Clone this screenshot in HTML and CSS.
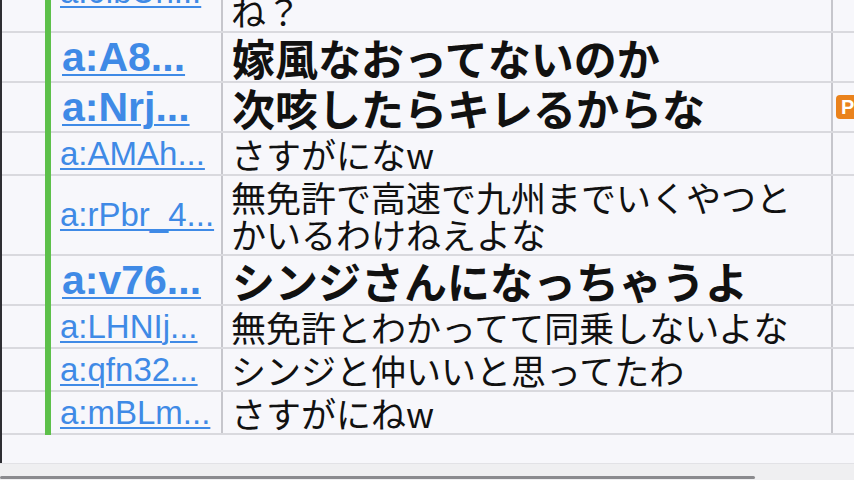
FILE: index.html
```html
<!DOCTYPE html>
<html lang="ja">
<head>
<meta charset="utf-8">
<title>コメント一覧</title>
<link rel="stylesheet" href="styles.css">
</head>
<body>
<div class="viewport">
  <table class="comments">
    <colgroup>
      <col class="c-blank"><col class="c-name"><col class="c-text"><col class="c-extra">
    </colgroup>
    <tbody>
      <tr>
        <td class="blank"></td>
        <td class="name"><a href="#">a:0lbUh...</a></td>
        <td class="text">お前ら本当に免許持ってるんだよ<br>ね？</td>
        <td class="extra"></td>
      </tr>
      <tr class="big">
        <td class="blank"></td>
        <td class="name"><a href="#">a:A8...</a></td>
        <td class="text">嫁風なおってないのか</td>
        <td class="extra"></td>
      </tr>
      <tr class="big">
        <td class="blank"></td>
        <td class="name"><a href="#">a:Nrj...</a></td>
        <td class="text">次咳したらキレるからな</td>
        <td class="extra"><span class="badge">P</span></td>
      </tr>
      <tr>
        <td class="blank"></td>
        <td class="name"><a href="#">a:AMAh...</a></td>
        <td class="text">さすがになw</td>
        <td class="extra"></td>
      </tr>
      <tr>
        <td class="blank"></td>
        <td class="name"><a href="#">a:rPbr_4...</a></td>
        <td class="text">無免許で高速で九州までいくやつと<br>かいるわけねえよな</td>
        <td class="extra"></td>
      </tr>
      <tr class="big">
        <td class="blank"></td>
        <td class="name"><a href="#">a:v76...</a></td>
        <td class="text">シンジさんになっちゃうよ</td>
        <td class="extra"></td>
      </tr>
      <tr>
        <td class="blank"></td>
        <td class="name"><a href="#">a:LHNIj...</a></td>
        <td class="text">無免許とわかってて同乗しないよな</td>
        <td class="extra"></td>
      </tr>
      <tr>
        <td class="blank"></td>
        <td class="name"><a href="#">a:qfn32...</a></td>
        <td class="text">シンジと仲いいと思ってたわ</td>
        <td class="extra"></td>
      </tr>
      <tr>
        <td class="blank"></td>
        <td class="name"><a href="#">a:mBLm...</a></td>
        <td class="text">さすがにねw</td>
        <td class="extra"></td>
      </tr>
    </tbody>
  </table>
</div>
<div class="hscroll"><div class="thumb"></div></div>
</body>
</html>
```
FILE: styles.css
```css
html, body {
  margin: 0;
  padding: 0;
  width: 854px;
  height: 480px;
  overflow: hidden;
  background: #f7f7fb;
}

.viewport {
  height: 463px;
  overflow: hidden;
  border-left: 2px solid #2e2e33;
  box-sizing: border-box;
}

.comments {
  margin-top: -47px;
  border-collapse: collapse;
  table-layout: fixed;
  width: 912px;
}

.c-blank { width: 46px; }
.c-name { width: 174px; }
.c-text { width: 610px; }
.c-extra { width: 82px; }

.comments td {
  border-bottom: 2px solid #d9d9de;
  padding: 0;
  vertical-align: middle;
  white-space: nowrap;
  overflow: hidden;
}

.name {
  border-left: 6px solid #5dc04a;
  border-right: 2px solid #c6c6cc;
  padding-left: 9px !important;
  font-family: "Liberation Sans", Arial, sans-serif;
  font-size: 33px;
  line-height: 36px;
}

.name a {
  color: #3f8ae6;
  text-decoration: underline;
  text-decoration-thickness: 2px;
  text-underline-offset: 3px;
}

.text {
  border-right: 2px solid #c6c6cc;
  padding: 2px 0 2px 8px !important;
  font-family: "Noto Sans CJK JP", sans-serif;
  font-size: 35px;
  line-height: 37px;
  color: #111;
}

.big .name {
  font-size: 41px;
  font-weight: bold;
  padding-left: 11px !important;
}

.big .text {
  font-size: 43px;
  font-weight: bold;
  line-height: 44px;
  padding-left: 9px !important;
}

.extra {
  padding-left: 3px !important;
}

.badge {
  display: inline-block;
  background: #ea821c;
  color: #fff;
  font-family: "Liberation Sans", Arial, sans-serif;
  font-weight: bold;
  font-size: 20px;
  line-height: 24px;
  padding: 0 5px;
  border-radius: 4px;
  vertical-align: middle;
}

.hscroll {
  height: 17px;
  background: #efeff1;
  border-top: 1px solid #e2e2e6;
  box-sizing: border-box;
  padding-top: 12px;
}

.thumb {
  width: 755px;
  height: 3px;
  background: #8a8a8e;
  border-radius: 2px;
}
```
